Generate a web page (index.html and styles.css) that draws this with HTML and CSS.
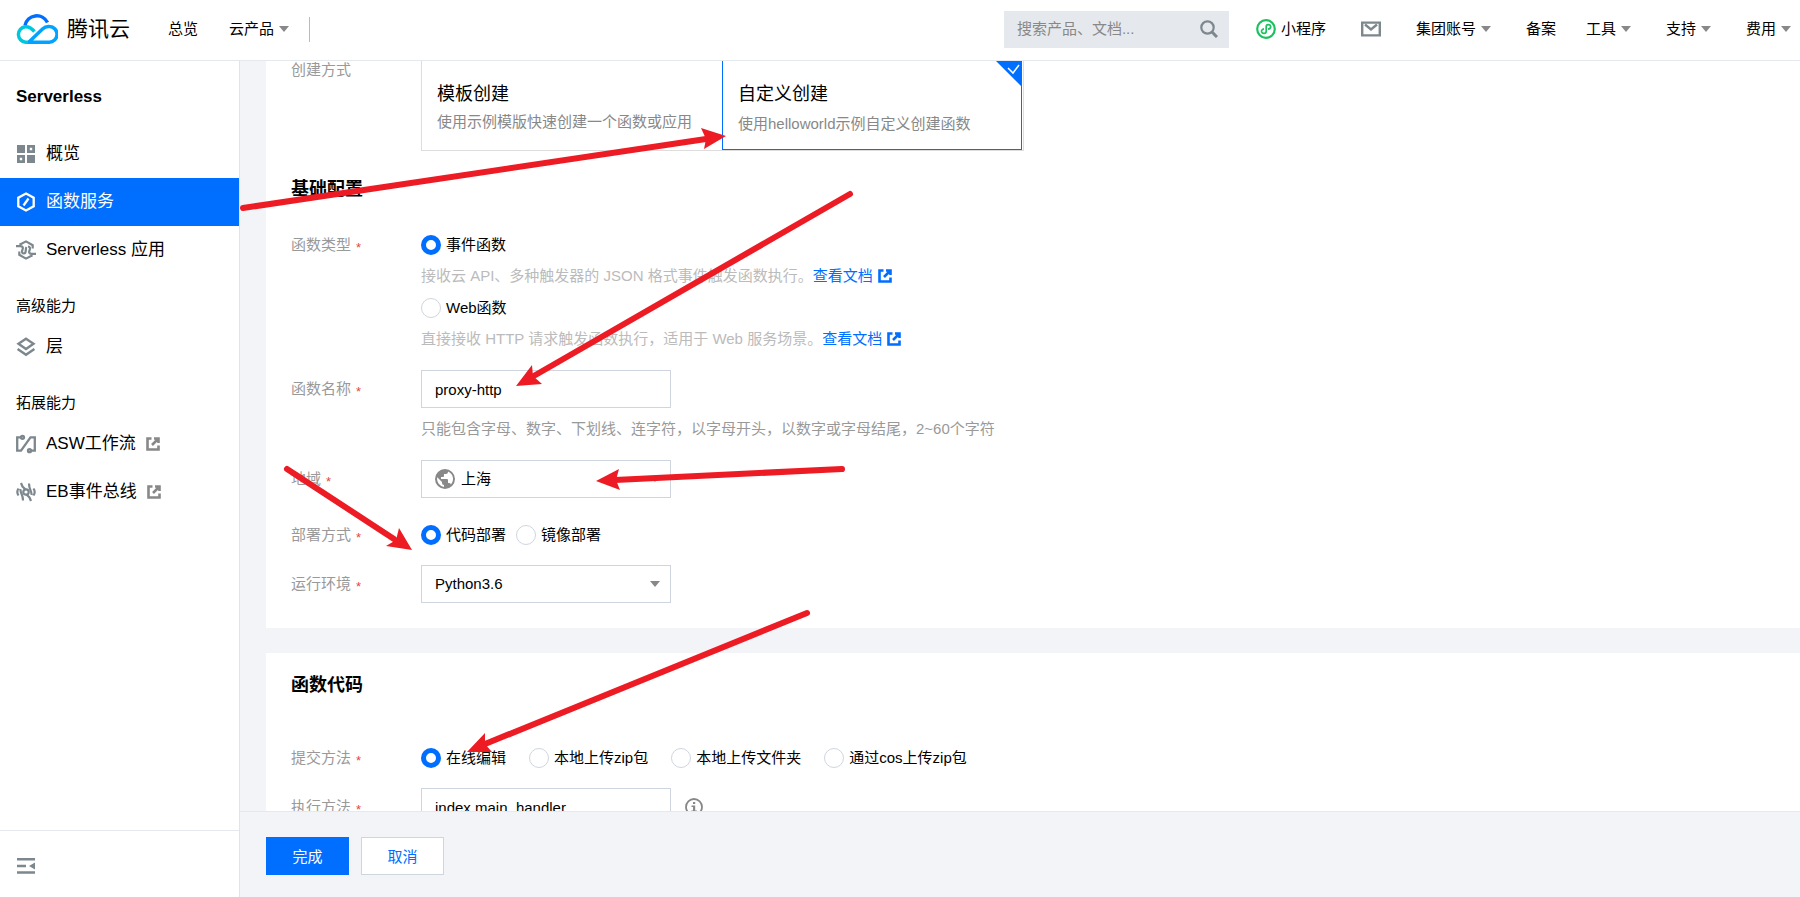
FILE: index.html
```html
<!DOCTYPE html>
<html lang="zh-CN">
<head>
<meta charset="utf-8">
<title>Serverless - 腾讯云</title>
<link rel="stylesheet" href="styles.css">
</head>
<body>
<svg class="sprite" aria-hidden="true">
  <symbol id="caret" viewBox="0 0 10 6"><path d="M0 0h10L5 6z" fill="currentColor"/></symbol>
  <symbol id="external" viewBox="0 0 14 14"><path d="M5.500 1.500H1.500v11h11V8.500M8 1.500h4.500V6M12.500 1.500L6 8" fill="none" stroke="currentColor" stroke-width="2.600"/></symbol>
</svg>
<div class="page">
  <header class="topbar">
    <a class="brand" href="#">
      <svg class="brand-mark" viewBox="0 0 42 30" fill="none" stroke-width="3.500">
        <path d="M9 11.500A12 12 0 0 1 31.500 8.500" stroke="#006eff"/>
        <path d="M18.500 17.500Q14 12.400 9.200 12.700A7.800 7.800 0 0 0 9.500 28.200H14" stroke="#00c8dc"/>
        <path d="M12 28.200H33A7.700 7.700 0 0 0 33.500 12.600Q29.500 12.200 26.500 15L13 28" stroke="#00a3ff"/>
      </svg>
      <span>腾讯云</span>
    </a>
    <nav class="nav-left">
      <a class="nav-item" href="#">总览</a>
      <a class="nav-item" href="#">云产品<svg class="caret"><use href="#caret"/></svg></a>
    </nav>
    <div class="search">
      <input type="search" aria-label="搜索" placeholder="搜索产品、文档...">
      <button type="button" aria-label="搜索">
        <svg viewBox="0 0 18 18" fill="none" stroke="#7c878e"><circle cx="7.500" cy="7.500" r="6.200" stroke-width="2.200"/><path d="M12 12l5 5" stroke-width="3"/></svg>
      </button>
    </div>
    <nav class="nav-right">
      <a class="nav-item" href="#"><svg class="mini" viewBox="0 0 20 20" fill="none" stroke="#1bc15f"><circle cx="10" cy="10" r="8.800" stroke-width="2.200"/><path d="M12 10.200C14 9.800 15 8.600 14.600 7.200C14 5 10.200 5 10.200 7.800V12.200C10.200 15 6.300 15 5.600 12.800C5.200 11.400 6.200 10.200 8 9.900" stroke-width="1.700"/></svg>小程序</a>
      <a class="nav-item" href="#" aria-label="消息"><svg class="mail" viewBox="0 0 20 16" fill="none" stroke="#7c878e" stroke-width="2.400"><path d="M1.200 1.600h17.600v12.800H1.200z"/><path d="M4 3.500L10 8.500l6-5"/></svg></a>
      <a class="nav-item" href="#">集团账号<svg class="caret"><use href="#caret"/></svg></a>
      <a class="nav-item nav-item-plain" href="#">备案</a>
      <a class="nav-item" href="#">工具<svg class="caret"><use href="#caret"/></svg></a>
      <a class="nav-item" href="#">支持<svg class="caret"><use href="#caret"/></svg></a>
      <a class="nav-item" href="#">费用<svg class="caret"><use href="#caret"/></svg></a>
    </nav>
  </header>

  <aside class="sidebar">
    <h1 class="product">Serverless</h1>
    <nav class="menu">
      <a class="menu-item" href="#"><svg viewBox="0 0 20 20" fill="#7c878e"><path d="M1 1h8v8H1zM11 11h8v8h-8z"/><path d="M11 1h8v8h-8zm2.800 2.800v2.400h2.400V3.800zM1 11h8v8H1zm2.800 2.800v2.400h2.400v-2.400z" fill-rule="evenodd"/></svg>概览</a>
      <a class="menu-item menu-item-active" href="#"><svg viewBox="0 0 20 20" fill="none" stroke="#fff" stroke-width="2.300"><path d="M10 1.500l7.700 4.200v8.600L10 18.500l-7.700-4.200V5.700z"/><path d="M12.500 6.500l-5 7"/></svg>函数服务</a>
      <a class="menu-item" href="#"><svg viewBox="0 0 20 20" fill="none" stroke="#7c878e" stroke-width="2.200"><path d="M3.500 4.800L10 1.400l6.700 3.800v3.300M16.500 15.200L10 18.600l-6.700-3.800v-3.300"/><path d="M0 6.200h4.500c2.500 0 2.800 1.600 2 3.300c-1 2.200-.5 4 1.500 4c3 0 .8-4 2.500-6.500M20 13.800h-4.500c-2.500 0-2.800-1.600-2-3.300c1-2.200.5-4-1.500-4"/></svg>Serverless 应用</a>
      <h2 class="menu-group">高级能力</h2>
      <a class="menu-item" href="#"><svg viewBox="0 0 20 20" fill="none" stroke="#7c878e" stroke-width="2.400"><path d="M10 1.800l7.500 5L10 12 2.500 6.800z"/><path d="M1.600 12L10 17.800 18.400 12"/></svg>层</a>
      <h2 class="menu-group">拓展能力</h2>
      <a class="menu-item" href="#"><svg viewBox="0 0 20 20" fill="none" stroke="#7c878e" stroke-width="2.300"><path d="M6 3.300H1.200v13.400H5L14.500 3.300h4.300v13.400H14"/><circle cx="6.500" cy="3.300" r="1.500"/><circle cx="13.500" cy="16.700" r="1.500"/></svg>ASW工作流<svg class="external"><use href="#external"/></svg></a>
      <a class="menu-item" href="#"><svg viewBox="0 0 20 20" fill="none" stroke="#7c878e" stroke-width="2.200"><circle cx="10" cy="10" r="2.700"/><path d="M5 1l1.500 3.500L9.500 7.500M15 19l-1.500-3.500L10.500 12.500M4.500 7c-.5 4 2.500 5 2.500 11.500M15.500 13c.5-4-2.500-5-2.500-11.500M2.500 6.500C.8 9 .8 11 2.500 13.500M17.500 6.500c1.700 2.500 1.700 4.500 0 7"/></svg>EB事件总线<svg class="external"><use href="#external"/></svg></a>
    </nav>
    <div class="collapse">
      <button type="button" aria-label="收起菜单"><svg viewBox="0 0 18 16" fill="#7c878e"><path d="M0 0h18v2.500H0zM0 6.700h9v2.500H0zM0 13.300h18v2.500H0zM18 4.500v7L12 8z"/></svg></button>
    </div>
  </aside>

  <main class="main">
    <div class="scroll">
      <section class="card card-config">
        <div class="row row-create">
          <span class="label">创建方式</span>
          <div class="choices">
            <button type="button" class="choice"><strong>模板创建</strong><span>使用示例模版快速创建一个函数或应用</span></button>
            <button type="button" class="choice choice-active"><strong>自定义创建</strong><span>使用helloworld示例自定义创建函数</span>
              <svg class="corner" viewBox="0 0 25 25"><path d="M0 0h25v25z" fill="#006eff"/><path d="M12 7l5 5 6-8" fill="none" stroke="#fff" stroke-width="1.500"/></svg>
            </button>
          </div>
        </div>
        <h2 class="section-title">基础配置</h2>
        <div class="row">
          <span class="label">函数类型<i>*</i></span>
          <div class="stack">
            <label class="radio"><input type="radio" name="type" checked>事件函数</label>
            <p class="hint hint-light">接收云 API、多种触发器的 JSON 格式事件触发函数执行。<a href="#">查看文档<svg class="external"><use href="#external"/></svg></a></p>
            <label class="radio"><input type="radio" name="type">Web函数</label>
            <p class="hint hint-light">直接接收 HTTP 请求触发函数执行，适用于 Web 服务场景。<a href="#">查看文档<svg class="external"><use href="#external"/></svg></a></p>
          </div>
        </div>
        <div class="row row-box">
          <label class="label" for="fn-name">函数名称<i>*</i></label>
          <div class="stack">
            <input class="control" id="fn-name" type="text" value="proxy-http">
            <p class="hint">只能包含字母、数字、下划线、连字符，以字母开头，以数字或字母结尾，2~60个字符</p>
          </div>
        </div>
        <div class="row row-box">
          <label class="label" for="region">地域<i>*</i></label>
          <div class="select">
            <svg class="globe" viewBox="0 0 24 24"><path fill="#888" d="M12 0a12 12 0 1 0 0 24 12 12 0 0 0 0-24zm-1.200 21.500A9.600 9.600 0 0 1 2.700 9.900l5.700 5.700v1.200a2.400 2.400 0 0 0 2.400 2.400zm8.300-3a2.400 2.400 0 0 0-2.300-1.700h-1.200v-3.600a1.200 1.200 0 0 0-1.200-1.200H7.200V9.600h2.400a1.200 1.200 0 0 0 1.200-1.200V6h2.400a2.400 2.400 0 0 0 2.400-2.400v-.5a9.600 9.600 0 0 1 3.500 15.400z"/></svg>
            <select class="control control-icon" id="region"><option>上海</option></select>
            <svg class="caret"><use href="#caret"/></svg>
          </div>
        </div>
        <div class="row row-radios">
          <span class="label">部署方式<i>*</i></span>
          <div class="inline">
            <label class="radio"><input type="radio" name="deploy" checked>代码部署</label>
            <label class="radio"><input type="radio" name="deploy">镜像部署</label>
          </div>
        </div>
        <div class="row row-box row-after-radios">
          <label class="label" for="runtime">运行环境<i>*</i></label>
          <div class="select">
            <select class="control" id="runtime"><option>Python3.6</option></select>
            <svg class="caret"><use href="#caret"/></svg>
          </div>
        </div>
      </section>

      <section class="card card-code">
        <h2 class="section-title">函数代码</h2>
        <div class="row">
          <span class="label">提交方法<i>*</i></span>
          <div class="inline inline-wide">
            <label class="radio"><input type="radio" name="submit" checked>在线编辑</label>
            <label class="radio"><input type="radio" name="submit">本地上传zip包</label>
            <label class="radio"><input type="radio" name="submit">本地上传文件夹</label>
            <label class="radio"><input type="radio" name="submit">通过cos上传zip包</label>
          </div>
        </div>
        <div class="row row-box row-after-radios">
          <label class="label" for="handler">执行方法<i>*</i></label>
          <div class="with-info">
            <input class="control" id="handler" type="text" value="index.main_handler">
            <svg class="info" viewBox="0 0 18 18"><circle cx="9" cy="9" r="8" fill="none" stroke="#888" stroke-width="1.800"/><path d="M8 4h2.200v2H8zM6.500 7.500h3.700v5H12V14H6.300v-1.500H8V9H6.500z" fill="#888"/></svg>
          </div>
        </div>
      </section>
    </div>
    <footer class="actions">
      <button type="button" class="btn btn-primary">完成</button>
      <button type="button" class="btn">取消</button>
    </footer>
  </main>
</div>

<svg class="annotations" viewBox="0 0 1800 897" width="1800" height="897" aria-hidden="true">
  <g stroke="#ed1c24" stroke-width="6" stroke-linecap="round">
    <path d="M243 208L706 139"/><path d="M850 194L532 377"/><path d="M842 469L615 480"/><path d="M287 469L394 539"/><path d="M807 613L485 744"/>
  </g>
  <g fill="#ed1c24">
    <path d="M726 136L701 128 706 139 704 149z"/>
    <path d="M516 386L532 365 533 376 542 384z"/>
    <path d="M596 481L619 469 616 480 620 490z"/>
    <path d="M412 550L399 528 396 540 386 546z"/>
    <path d="M467 752L485 733 485 744 492 752z"/>
  </g>
</svg>
</body>
</html>
```
FILE: styles.css
```css
* { box-sizing: border-box; }

body {
  margin: 0;
  font-family: "Liberation Sans", "Noto Sans CJK SC", sans-serif;
  font-size: 15px;
  font-weight: 400;
  line-height: 20px;
  color: #000;
}

button, input, select { font: inherit; color: inherit; margin: 0; }
a { color: inherit; text-decoration: none; }
h1, h2, p { margin: 0; }
svg { flex: none; }

.sprite { position: absolute; width: 0; height: 0; }

.page {
  display: grid;
  grid-template: auto minmax(0, 1fr) / 240px minmax(0, 1fr);
  height: 100vh;
  overflow: hidden;
  background: #f3f4f7;
}

/* Top bar */
.topbar {
  grid-column: 1 / -1;
  display: flex;
  align-items: center;
  height: 61px;
  padding: 0 9px 2px 16px;
  background: #fff;
  border-bottom: 1px solid #e5e8ed;
  white-space: nowrap;
}

.brand { display: flex; align-items: center; gap: 9px; font-size: 21px; }
.brand-mark { width: 42px; height: 30px; }

.nav-left {
  display: flex;
  align-items: center;
  gap: 31px;
  height: 25px;
  margin-left: 38px;
  padding-right: 20px;
  border-right: 1px solid #bbb;
}

.nav-item { display: flex; align-items: center; gap: 5px; }
.caret { width: 10px; height: 6px; color: #888; }

.search {
  display: flex;
  align-items: center;
  width: 225px;
  height: 37px;
  margin-left: auto;
  padding: 0 11px 0 13px;
  background: #e5e8ed;
}
.search input { flex: 1; min-width: 0; padding: 0; border: 0; outline: 0; background: none; appearance: none; }
.search input::placeholder { color: #888; opacity: 1; }
.search button { display: flex; padding: 0; border: 0; background: none; }
.search svg { width: 18px; height: 18px; }

.nav-right { display: flex; align-items: center; gap: 35px; margin-left: 27px; }
.nav-item-plain { margin-right: -5px; }
.mini { width: 20px; height: 20px; }
.mail { width: 20px; height: 16px; }

/* Sidebar */
.sidebar { display: flex; flex-direction: column; background: #fff; border-right: 1px solid #e0e3e8; }
.product { margin: 25px 16px 22px; font-size: 17px; line-height: 22px; font-weight: 700; }
.menu { flex: 1; }
.menu-item {
  display: flex;
  align-items: center;
  height: 48px;
  padding: 0 16px;
  gap: 10px;
  font-size: 17px;
}
.menu-item svg { width: 20px; height: 20px; }
.menu-item .external { width: 14px; height: 14px; color: #888; }
.menu-item-active { background: #006eff; color: #fff; }
.menu-group { padding: 22px 16px 7px; font-size: 15px; line-height: 20px; font-weight: inherit; }
.collapse { height: 67px; padding: 27px 17px; border-top: 1px solid #e5e8ed; }
.collapse button { display: block; padding: 0; border: 0; background: none; }
.collapse svg { display: block; width: 18px; height: 16px; }

/* Main */
.main { display: flex; flex-direction: column; min-width: 0; min-height: 0; }
.scroll {
  flex: 1;
  min-height: 0;
  overflow: hidden;
  display: flex;
  flex-direction: column;
  gap: 25px;
  padding-left: 26px;
  border-bottom: 1px solid #e5e8ed;
}
.card { flex: none; padding: 0 25px 25px; background: #fff; }
.card-code { padding-top: 20px; }
.section-title { font-size: 18px; line-height: 24px; font-weight: 700; }
.card-config .section-title { margin: 26px 0 34px; }
.card-code .section-title { margin-bottom: 51px; }

.row { display: flex; }
.row + .row { margin-top: 21px; }
.row + .row-radios { margin-top: 27px; }
.row + .row-after-radios { margin-top: 20px; }
.label { flex: none; width: 130px; color: #999; }
.row-create .label { line-height: 18px; }
.label i { margin-left: 5px; color: #e54545; font-size: 13px; font-style: normal; vertical-align: -2px; line-height: 1; }
.row-box .label { padding-top: 9px; }
.stack { display: flex; flex-direction: column; gap: 11px; }
.inline { display: flex; gap: 10px; }
.inline-wide { gap: 23px; }

.choices { display: flex; width: 603px; border: 1px solid #ddd; border-top: 0; }
.choice {
  position: relative;
  display: flex;
  flex-direction: column;
  gap: 5px;
  width: 300px;
  height: 89px;
  padding: 20px 15px;
  border: 0;
  background: #fff;
  text-align: left;
  white-space: nowrap;
}
.choice strong { font-size: 18px; line-height: 26px; font-weight: inherit; }
.choice span { color: #888; }
.choice-active { gap: 7px; border: 1px solid #006eff; border-top: 0; }
.corner { position: absolute; top: 0; right: 0; width: 25px; height: 25px; }

.radio { display: flex; align-items: center; gap: 5px; }
.hint + .radio { margin-top: 1px; }
.radio input {
  appearance: none;
  width: 20px;
  height: 20px;
  border: 1px solid #cfd5de;
  border-radius: 50%;
  background: #fff;
}
.radio input:checked { border: 5px solid #006eff; }

.hint { display: flex; align-items: center; color: #999; }
.hint-light { color: #bbb; }
.hint a { display: flex; align-items: center; gap: 5px; color: #006eff; }
.hint .external { width: 14px; height: 14px; }

.control {
  display: block;
  width: 250px;
  height: 38px;
  padding: 0 13px;
  border: 1px solid #cfd5de;
  border-radius: 0;
  background: #fff;
  appearance: none;
}
.control-icon { padding-left: 39px; }
.select { position: relative; }
.select .caret { position: absolute; right: 11px; top: 16px; }
.globe { position: absolute; left: 14px; top: 9px; width: 20px; height: 20px; }
.with-info { display: flex; align-items: center; gap: 14px; }
.info { width: 18px; height: 18px; }

.actions { display: flex; gap: 12px; padding: 25px 26px 22px; }
.btn { width: 83px; height: 38px; padding: 2px 0 0; border: 1px solid #cfd5de; background: #fff; color: #006eff; }
.btn-primary { border-color: #006eff; background: #006eff; color: #fff; }

/* Hand-drawn arrows lying over the page */
.annotations { position: absolute; left: 0; top: 0; pointer-events: none; }
```
